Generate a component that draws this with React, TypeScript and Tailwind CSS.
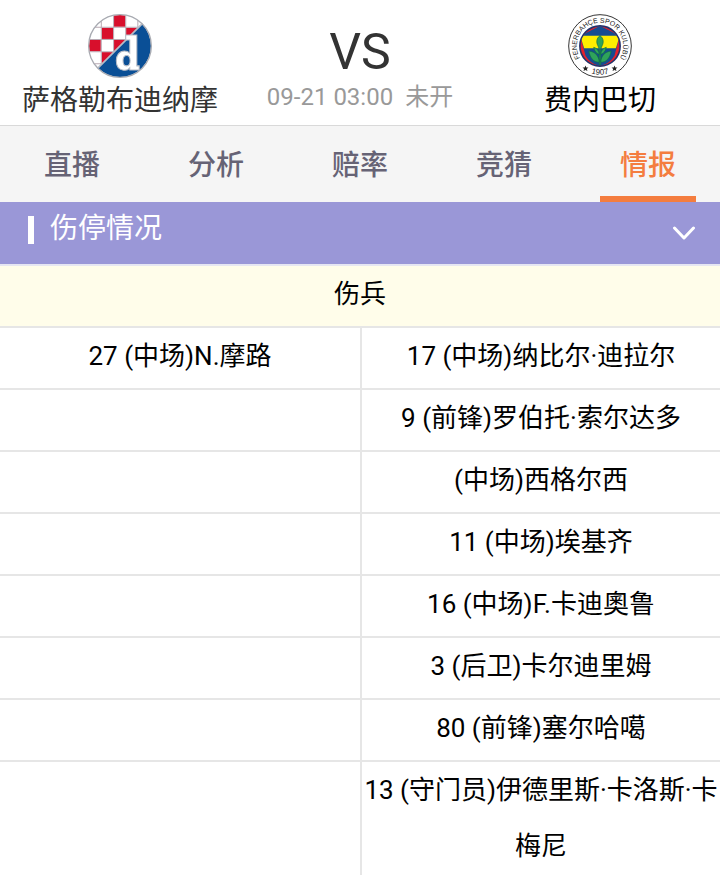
import { useState } from "react";

const tabs = ["直播", "分析", "赔率", "竞猜", "情报"];

const injuries: [string, string][] = [
  ["27 (中场)N.摩路", "17 (中场)纳比尔·迪拉尔"],
  ["", "9 (前锋)罗伯托·索尔达多"],
  ["", "(中场)西格尔西"],
  ["", "11 (中场)埃基齐"],
  ["", "16 (中场)F.卡迪奧鲁"],
  ["", "3 (后卫)卡尔迪里姆"],
  ["", "80 (前锋)塞尔哈噶"],
  ["", "13 (守门员)伊德里斯·卡洛斯·卡梅尼"],
];

function ZagrebCrest() {
  return (
    <svg viewBox="24 24 190 190" className="size-16" role="img" aria-label="萨格勒布迪纳摩">
      <defs>
        <clipPath id="zagreb-disc">
          <circle cx="119" cy="119" r="92" />
        </clipPath>
      </defs>
      <g clipPath="url(#zagreb-disc)">
        <rect x="22" y="22" width="194" height="194" fill="#fff" />
        <g fill="#d80f2c">
          <rect x="101" y="24" width="34" height="38" />
          <rect x="65" y="65" width="34" height="33" />
          <rect x="24" y="101" width="38" height="34" />
          <rect x="137" y="65" width="34" height="33" />
          <rect x="101" y="101" width="34" height="34" />
          <rect x="65" y="137" width="34" height="34" />
        </g>
        <g stroke="#b9a9b3" strokeWidth="3">
          <path d="M63.500 22V216M100 22V180M136 22V140M172 22V100M22 63.500H200M22 99.500H150M22 136H120M22 172H80" />
        </g>
        <path d="M48 190 192 46H220V220H48Z" fill="#0a4f96" stroke="#b7bcc6" strokeWidth="5" />
      </g>
      <circle cx="119" cy="119" r="93" fill="none" stroke="#a9abb2" strokeWidth="4" />
      <path
        fillRule="evenodd"
        d="M136 86H169V178H176V190H148V184C143 190 136 192 130 191C115 190 108 178 108 163C108 147 117 134 132 134C139 134 144 136 148 140V101H136ZM139 147C130 147 128 154 128 163C128 172 131 178 138 178C146 178 149 172 149 163C149 154 147 147 139 147Z"
        fill="#fff"
        stroke="#b7bcc6"
        strokeWidth="3"
      />
    </svg>
  );
}

function FenerbahceCrest() {
  return (
    <svg viewBox="23 26 194 194" className="size-16" role="img" aria-label="费内巴切">
      <defs>
        <path id="fb-top" d="M60 160A70.500 70.500 0 0 1 49.500 123A70.500 70.500 0 0 1 190.500 123A70.500 70.500 0 0 1 165.300 177" />
        <path id="fb-bottom" d="M70 197Q120 223 170 197" />
        <clipPath id="fb-disc">
          <circle cx="120" cy="123" r="59" />
        </clipPath>
      </defs>
      <circle cx="120" cy="123" r="95" fill="#fff" stroke="#333" strokeWidth="3" />
      <circle cx="120" cy="123" r="61" fill="#e4202c" stroke="#24346c" strokeWidth="5" />
      <g clipPath="url(#fb-disc)">
        <path d="M60 92 120 62 180 92 164 152Q150 178 120 184Q90 178 76 152Z" fill="#164c91" />
        <path d="M60 92H180L168 130H72Z" fill="#ffed00" />
      </g>
      <g fill="#2fa35a" stroke="#0c6b43" strokeWidth="2">
        <path d="M120 91C108 101 109 112 113 121L118 132V180H122V132L127 121C131 112 132 101 120 91Z" />
        <path d="M118 172C101 173 90 160 86 138C107 141 116 153 118 172Z" />
        <path d="M122 172C139 173 150 160 154 138C133 141 124 153 122 172Z" />
        <path d="M118 148C109 147 103 139 101 127C111 130 117 137 118 148Z" />
        <path d="M122 148C131 147 137 139 139 127C129 130 123 137 122 148Z" />
      </g>
      <g fill="#222" fontFamily="Liberation Sans, Arial, sans-serif">
        <text fontSize="21">
          <textPath href="#fb-top">FENERBAHÇE SPOR KULÜBÜ</textPath>
        </text>
        <text fontSize="24" textAnchor="middle">
          <textPath href="#fb-bottom" startOffset="50%">1907</textPath>
        </text>
      </g>
      <g fill="#222">
        <path id="fb-star" d="M76 182 78.500 188 85 188.500 80 193 82 199 76 195.500 70 199 72 193 67 188.500 73.500 188Z" />
        <use href="#fb-star" x="88" />
      </g>
    </svg>
  );
}

export default function App() {
  const [active, setActive] = useState("情报");
  const [open, setOpen] = useState(true);

  return (
    <div className="bg-white font-['Roboto','Noto_Sans_CJK_SC',sans-serif] text-black">
      <header className="grid h-[126px] grid-cols-3 border-b border-[#d9d9d9] text-center">
        <div className="flex flex-col items-center pt-3.5">
          <ZagrebCrest />
          <h2 className="text-[28px] leading-[46px] whitespace-nowrap text-[#333]">萨格勒布迪纳摩</h2>
        </div>
        <div className="flex flex-col items-center pt-6">
          <div className="text-[50px] leading-[56px] text-[#333]">VS</div>
          <p className="flex gap-3 text-[24px] leading-[34px] whitespace-nowrap text-[#999]">
            <time>09-21 03:00</time>
            <span>未开</span>
          </p>
        </div>
        <div className="flex flex-col items-center pt-3.5">
          <FenerbahceCrest />
          <h2 className="text-[28px] leading-[46px] whitespace-nowrap">费内巴切</h2>
        </div>
      </header>

      <nav className="grid h-[76px] grid-cols-5 bg-[#f5f5f5]">
        {tabs.map((tab) => (
          <button
            key={tab}
            type="button"
            onClick={() => setActive(tab)}
            className={
              "mx-6 border-b-6 pt-2.5 text-[28px] font-medium " +
              (tab === active ? "border-[#f47d3f] text-[#f47d3f]" : "border-transparent text-[#666375]")
            }
          >
            {tab}
          </button>
        ))}
      </nav>

      <section>
        <button
          type="button"
          aria-expanded={open}
          onClick={() => setOpen(!open)}
          className="flex h-[62px] w-full items-start bg-[#9a97d7] pr-6 pl-7 text-left text-white"
        >
          <span className="mt-3.5 h-7 w-1.5 bg-white" />
          <span className="ml-4 flex-1 text-[28px] leading-[54px]">伤停情况</span>
          <svg viewBox="0 0 24 16" className="mt-6 h-4 w-6" fill="none" stroke="currentColor" strokeWidth="3">
            <path d="M2.500 2 12 12 21.500 2" strokeLinecap="round" strokeLinejoin="round" />
          </svg>
        </button>
        {open && (
          <table className="w-full table-fixed border-separate border-spacing-0 text-center text-[26px] leading-[56px]">
            <thead>
              <tr>
                <th colSpan={2} className="border-y-2 border-t-[#e6e6f2] border-b-[#e6e6e6] bg-[#fffdea] p-0 pb-1 font-normal">
                  伤兵
                </th>
              </tr>
            </thead>
            <tbody>
              {injuries.map(([home, away]) => (
                <tr key={away}>
                  <td className="border-b-2 border-[#e6e6e6] p-0 pb-1 align-top">{home}</td>
                  <td className="border-b-2 border-l-2 border-[#e6e6e6] p-0 pb-1 align-top">{away}</td>
                </tr>
              ))}
            </tbody>
          </table>
        )}
      </section>
    </div>
  );
}
